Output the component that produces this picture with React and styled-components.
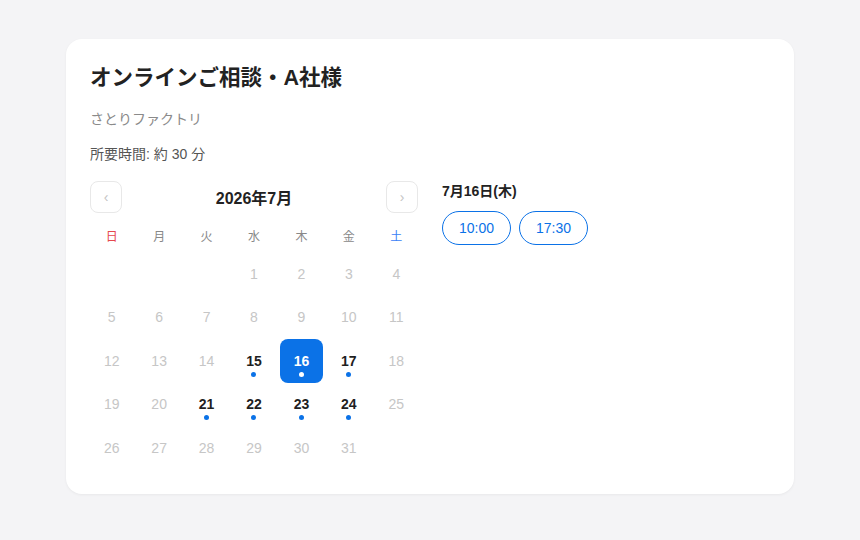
import React from 'react';
import styled, {createGlobalStyle} from 'styled-components';

const GlobalStyle = createGlobalStyle`
  html, body {
    margin: 0;
    padding: 0;
    background: #f4f4f6;
    font-family: "Liberation Sans", "Noto Sans CJK JP", sans-serif;
    color: #222;
  }
`;

const Page = styled.div`
  padding: 39px 66px;
`;

const Card = styled.div`
  background: #fff;
  border-radius: 16px;
  box-shadow: 0 1px 3px rgba(0, 0, 0, 0.05);
  padding: 24px 24px 24px;
  height: 455px;
  box-sizing: border-box;
`;

const Title = styled.h1`
  margin: 0;
  font-size: 21.5px;
  line-height: 30px;
  font-weight: 700;
  color: #222;
`;

const Org = styled.div`
  margin-top: 16px;
  font-size: 14px;
  line-height: 20px;
  color: #8a8a8a;
`;

const Duration = styled.div`
  margin-top: 15px;
  font-size: 14px;
  line-height: 20px;
  color: #555;
`;

const Body = styled.div`
  margin-top: 17px;
  display: flex;
  gap: 24px;
  align-items: flex-start;
`;

const Calendar = styled.div`
  width: 328px;
`;

const MonthBar = styled.div`
  display: flex;
  align-items: center;
  justify-content: space-between;
  height: 32px;
`;

const NavButton = styled.button`
  width: 32px;
  height: 32px;
  border: 1px solid #e8e8e8;
  border-radius: 8px;
  background: #fff;
  color: #c4c4c4;
  font-size: 14px;
  padding: 0;
  display: flex;
  align-items: center;
  justify-content: center;
  font-family: inherit;
`;

const MonthLabel = styled.div`
  font-size: 16px;
  font-weight: 700;
  color: #222;
`;

const Weekdays = styled.div`
  margin-top: 8px;
  display: grid;
  grid-template-columns: repeat(7, 1fr);
  column-gap: 4px;
  height: 28px;
  align-items: center;
`;

const Weekday = styled.div`
  text-align: center;
  font-size: 12px;
  color: ${p => (p.$tone === 'sun' ? '#e5484d' : p.$tone === 'sat' ? '#3b82f6' : '#888')};
`;

const Days = styled.div`
  margin-top: 3px;
  display: grid;
  grid-template-columns: repeat(7, 1fr);
  column-gap: 4px;
  grid-auto-rows: 43.5px;
`;

const Day = styled.div`
  position: relative;
  display: flex;
  align-items: center;
  justify-content: center;
  border-radius: 8px;
  font-size: 14px;
  font-weight: ${p => (p.$open ? 700 : 400)};
  color: ${p => (p.$selected ? '#fff' : p.$open ? '#1f1f1f' : '#c6c6c6')};
  background: ${p => (p.$selected ? '#0b72e7' : 'transparent')};
`;

const Dot = styled.span`
  position: absolute;
  left: 50%;
  bottom: 6px;
  width: 5px;
  height: 5px;
  margin-left: -2.5px;
  border-radius: 50%;
  background: ${p => (p.$light ? '#fff' : '#0b72e7')};
`;

const Slots = styled.div`
  display: flex;
  flex-direction: column;
`;

const SlotDate = styled.div`
  font-size: 14px;
  font-weight: 700;
  line-height: 20px;
  color: #222;
`;

const SlotRow = styled.div`
  margin-top: 10px;
  display: flex;
  gap: 8px;
`;

const SlotButton = styled.button`
  width: 69px;
  height: 34px;
  border: 1px solid #0b72e7;
  border-radius: 17px;
  background: #fff;
  color: #0b72e7;
  font-size: 14px;
  font-family: inherit;
  padding: 0;
`;

const weekdays = [
  {label: '日', tone: 'sun'},
  {label: '月'},
  {label: '火'},
  {label: '水'},
  {label: '木'},
  {label: '金'},
  {label: '土', tone: 'sat'},
];

const openDays = [15, 16, 17, 21, 22, 23, 24];
const selectedDay = 16;
const firstWeekday = 3; // 2026-07-01 is a Wednesday

const App = () => {
  const cells = [];
  for (let i = 0; i < firstWeekday; i++) cells.push(null);
  for (let d = 1; d <= 31; d++) cells.push(d);

  return (
    <Page>
      <GlobalStyle/>
      <Card>
        <Title>オンラインご相談・A社様</Title>
        <Org>さとりファクトリ</Org>
        <Duration>所要時間: 約 30 分</Duration>
        <Body>
          <Calendar>
            <MonthBar>
              <NavButton aria-label="前の月">‹</NavButton>
              <MonthLabel>2026年7月</MonthLabel>
              <NavButton aria-label="次の月">›</NavButton>
            </MonthBar>
            <Weekdays>
              {weekdays.map(w => (
                <Weekday key={w.label} $tone={w.tone}>{w.label}</Weekday>
              ))}
            </Weekdays>
            <Days>
              {cells.map((d, i) => {
                if (d === null) return <div key={'e' + i}/>;
                const open = openDays.includes(d);
                const selected = d === selectedDay;
                return (
                  <Day key={d} $open={open} $selected={selected}>
                    {d}
                    {open && <Dot $light={selected}/>}
                  </Day>
                );
              })}
            </Days>
          </Calendar>
          <Slots>
            <SlotDate>7月16日(木)</SlotDate>
            <SlotRow>
              <SlotButton>10:00</SlotButton>
              <SlotButton>17:30</SlotButton>
            </SlotRow>
          </Slots>
        </Body>
      </Card>
    </Page>
  );
};

export default App;
